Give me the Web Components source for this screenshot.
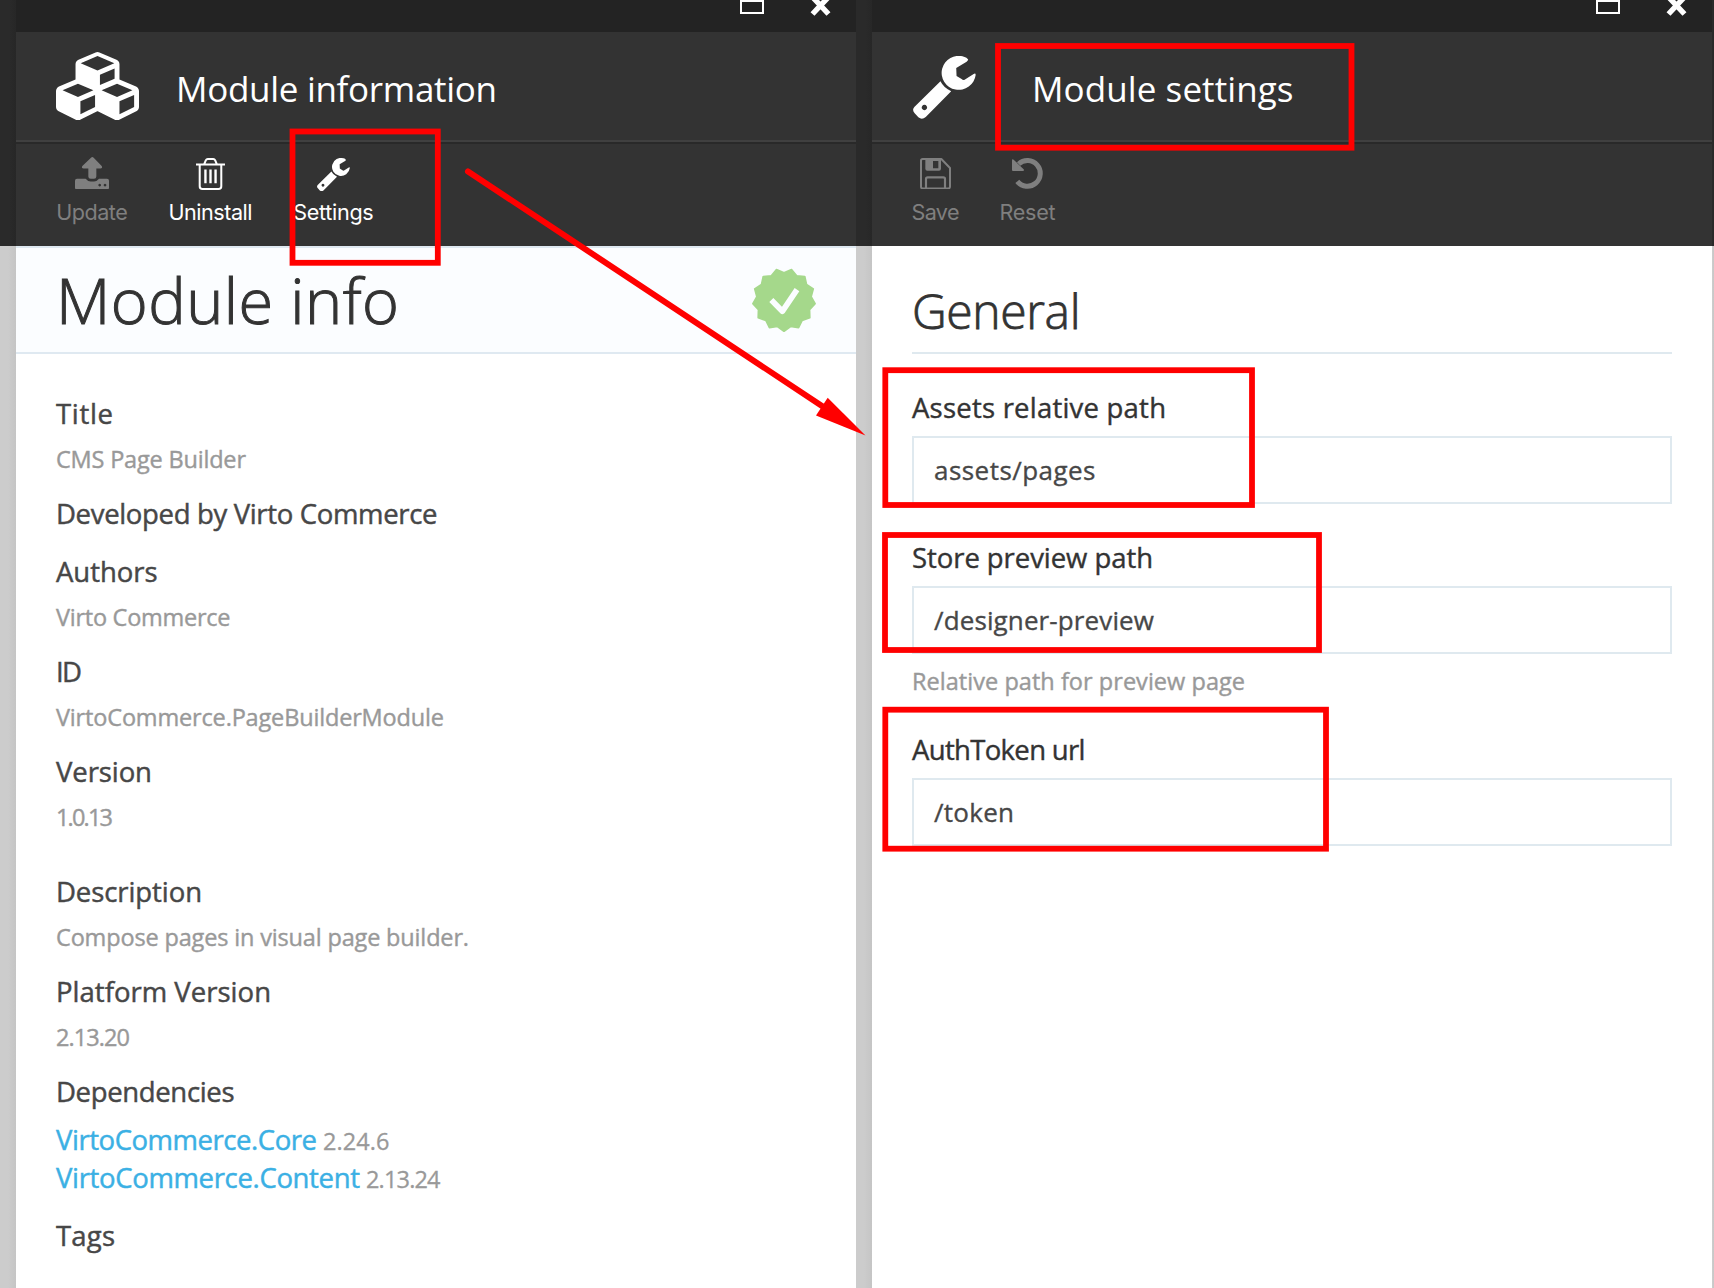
<!DOCTYPE html>
<html lang="en">
<head>
<meta charset="utf-8">
<title>Module settings</title>
<style>
html,body{margin:0;padding:0}
body{width:1714px;height:1288px;overflow:hidden;position:relative;background:#fff;font-family:"Open Sans","Noto Sans",sans-serif}
</style>
</head>
<body>
<vc-workspace>
  <vc-gutter style="--w:16px"></vc-gutter>
  <vc-blade>
    <vc-icon slot="icon" name="cubes" w="83" h="68.4"></vc-icon>
    <vc-text slot="title" w="321">Module information</vc-text>
    <vc-tool slot="tools" icon="update" iw="34" ih="32.5" dy="4.5" w="72" tw="71.5" label="Update" disabled></vc-tool>
    <vc-tool slot="tools" icon="trash" iw="29" ih="32" w="85" tw="84" label="Uninstall"></vc-tool>
    <vc-tool slot="tools" icon="wrench" iw="33" ih="33.5" w="81" tw="80.5" label="Settings"></vc-tool>
    <vc-banner><vc-text w="343">Module info</vc-text><vc-icon slot="badge" name="badge" w="64" h="64"></vc-icon></vc-banner>
    <vc-details>
      <vc-fact><vc-text w="57">Title</vc-text><vc-text slot="value" w="190">CMS Page Builder</vc-text></vc-fact>
      <vc-fact bare><vc-text w="381.5">Developed by Virto Commerce</vc-text></vc-fact>
      <vc-fact><vc-text w="101.5">Authors</vc-text><vc-text slot="value" w="174.5">Virto Commerce</vc-text></vc-fact>
      <vc-fact><vc-text w="26">ID</vc-text><vc-text slot="value" w="388">VirtoCommerce.PageBuilderModule</vc-text></vc-fact>
      <vc-fact class="last"><vc-text w="96">Version</vc-text><vc-text slot="value" w="57">1.0.13</vc-text></vc-fact>
      <vc-fact><vc-text w="146">Description</vc-text><vc-text slot="value" w="413">Compose pages in visual page builder.</vc-text></vc-fact>
      <vc-fact><vc-text w="215">Platform Version</vc-text><vc-text slot="value" w="74">2.13.20</vc-text></vc-fact>
      <vc-fact class="deps"><vc-text w="178.5">Dependencies</vc-text></vc-fact>
      <vc-dependency><vc-text w="261">VirtoCommerce.Core</vc-text><vc-text slot="version" w="66.5">2.24.6</vc-text></vc-dependency>
      <vc-dependency><vc-text w="304">VirtoCommerce.Content</vc-text><vc-text slot="version" w="74.5">2.13.24</vc-text></vc-dependency>
      <vc-fact class="tags"><vc-text w="59">Tags</vc-text></vc-fact>
    </vc-details>
  </vc-blade>
  <vc-gutter style="--w:16px"></vc-gutter>
  <vc-blade>
    <vc-icon slot="icon" class="low" name="wrench" w="63" h="63.3"></vc-icon>
    <vc-text slot="title" w="261.5">Module settings</vc-text>
    <vc-tool slot="tools" icon="save" iw="31" ih="31.4" w="47" tw="48" label="Save" disabled></vc-tool>
    <vc-tool slot="tools" icon="reset" iw="31" ih="31.4" w="57" tw="56" label="Reset" disabled></vc-tool>
    <vc-settings>
      <vc-text slot="heading" w="168.5">General</vc-text>
      <vc-setting><vc-text w="254">Assets relative path</vc-text><vc-text slot="value" w="161.5">assets/pages</vc-text></vc-setting>
      <vc-setting><vc-text w="241">Store preview path</vc-text><vc-text slot="value" w="220">/designer-preview</vc-text><vc-text slot="hint" w="333">Relative path for preview page</vc-text></vc-setting>
      <vc-setting><vc-text w="173.5">AuthToken url</vc-text><vc-text slot="value" w="80">/token</vc-text></vc-setting>
    </vc-settings>
  </vc-blade>
  <vc-gutter style="--w:2px"></vc-gutter>
</vc-workspace>
<vc-annotations></vc-annotations>

<script>
const element = (name, html, setup) => customElements.define(name, class extends HTMLElement {
  constructor() {
    super();
    this.attachShadow({ mode: 'open' });
  }
  connectedCallback() {
    this.shadowRoot.innerHTML = typeof html === 'function' ? html(this) : html;
    if (setup) setup(this);
  }
});

// Scalloped seal: 13 outer points, one of them at the bottom.
const seal = Array.from({ length: 26 }, (_, i) => {
  const a = Math.PI / 2 + i * Math.PI / 13, r = i % 2 ? 82 : 94;
  return (96 + r * Math.cos(a)).toFixed(1) + ',' + (96 + r * Math.sin(a)).toFixed(1);
}).join(' ');

const ICONS = {
  cubes: ['0 0 2176 1792', '<path fill-rule="evenodd" d="M640 1632l384-192v-314l-384 164v342zM576 1178l404-173l-404-173l-404 173zM1664 1632l384-192v-314l-384 164v342zM1600 1178l404-173l-404-173l-404 173zM1152 865l384-165v-266l-384 164v267zM1088 486l441-189l-441-189l-441 189zM2176 1024v416q0 36-19 67t-52 47l-448 224q-25 14-57 14t-57-14l-448-224q-4-2-7-4q-2 2-7 4l-448 224q-25 14-57 14t-57-14l-448-224q-33-16-52-47t-19-67v-416q0-38 21.5-70t56.5-48l434-186v-400q0-38 21.5-70t56.5-48l448-192q23-10 50-10t50 10l448 192q35 16 56.5 48t21.5 70v400l434 186q36 16 57 48t21 70z"/>'],
  wrench: ['0 0 188 190', '<path d="M164 10Q161 4 152 2A51 51 0 1 0 187 57Q187 50 181 54L154 71Q149 73 145 69L130 60L129 36L160 17Q166 13 164 10Z"/><path fill-rule="evenodd" d="M82 76Q91 95 114 106L38 183Q27 193 16 184L5 172Q-4 162 4 153ZM34 146.500a8 8 0 1 0 .1 0Z"/>'],
  update: ['0 0 102 97', '<path d="M52 0Q54 0 56 2L80 27Q84 34 76 34H64V58Q64 65 57 65H47Q40 65 40 58V34H26Q18 34 22 27L48 2Q50 0 52 0Z"/><path fill-rule="evenodd" d="M6 65H32Q38 73 47 73H57Q66 73 72 65H96Q102 65 102 71V91Q102 97 96 97H6Q0 97 0 91V71Q0 65 6 65ZM74 80a4 4 0 1 0 .1 0ZM90 80a4 4 0 1 0 .1 0Z"/>'],
  trash: ['0 0 86 94', '<g fill="none" stroke="currentColor" stroke-width="6"><path d="M0 19H86M24 19L29 7Q31 3 35 3H51Q55 3 57 7L62 19M11 19V83Q11 91 19 91H67Q75 91 75 83V19"/><path stroke-width="7" d="M28 34V74M43 34V74M58 34V74"/></g>'],
  save: ['0 0 93 94', '<g fill="none" stroke="currentColor" stroke-width="6"><path stroke-linejoin="round" d="M8 3H64L90 30V85Q90 91 85 91H8Q3 91 3 86V8Q3 3 8 3Z"/><path stroke-width="6.500" d="M18 92V63Q18 58 23 58H70Q75 58 75 63V92"/></g><path fill-rule="evenodd" d="M16 2H63V32Q63 38 57 38H22Q16 38 16 32ZM39 9V31H55V9Z"/>'],
  reset: ['0 0 93 94', '<path fill="none" stroke="currentColor" stroke-width="15" d="M16 70A38.500 38.500 0 1 0 20 18"/><path d="M0 7Q0 1 5 5L35 34Q38 39 32 39H3Q0 39 0 36Z"/>'],
  badge: ['0 0 192 192', `<polygon fill="#a5d88b" stroke="#a5d88b" stroke-width="5" stroke-linejoin="round" points="${seal}"/><path fill="none" stroke="#fbfdff" stroke-width="17" stroke-linejoin="round" d="M58 96L91 130L135 65"/>`]
};

element('vc-icon', h => {
  const [box, art] = ICONS[h.getAttribute('name')];
  const w = h.getAttribute('w'), t = h.getAttribute('h');
  return `<style>:host{display:block;width:${w}px;height:${t}px}svg{display:block;width:100%;height:100%;fill:currentColor}</style><svg viewBox="${box}" preserveAspectRatio="none">${art}</svg>`;
});

element('vc-workspace', `<style>:host{display:flex;width:1714px;height:1288px}</style><slot></slot>`);

element('vc-gutter', `<style>
:host{display:flex;flex-direction:column;flex:none;width:var(--w)}
.dark{height:246px;background:linear-gradient(90deg,#2a2a2a 60%,#272727)}
.light{flex:1;background:linear-gradient(90deg,#ccc 50%,#c5c5c5)}
</style><div class="dark"></div><div class="light"></div>`);

element('vc-blade', `<style>
:host{display:flex;flex-direction:column;flex:none;width:840px;height:1288px;background:#fff;color:#fff}
.bar{height:32px;flex:none;background:#232323;display:flex;justify-content:flex-end}
.bar svg{display:block;width:116px;height:32px}
header{height:108px;flex:none;background:#333;display:flex;border-bottom:2px solid #404040}
.mark{padding:20px 0 0 40px;box-sizing:border-box;width:160px}
::slotted(.low){margin-top:4px;margin-left:.7px}
.name{font-size:35px;line-height:48px;padding-top:33px}
nav{height:102px;flex:none;background:#333;display:flex;gap:40px;padding-left:40px;border-top:2px solid #292929}
main{flex:1;min-height:0;display:flex;flex-direction:column}
</style>
<div class="bar"><svg viewBox="0 0 116 32"><rect x="1" y="1" width="22" height="12" fill="none" stroke="#fff" stroke-width="2"/><path d="M72.500 -3L88.500 14M88.500 -3L72.500 14" stroke="#fff" stroke-width="5.400"/></svg></div>
<header><div class="mark"><slot name="icon"></slot></div><div class="name"><slot name="title"></slot></div></header>
<nav><slot name="tools"></slot></nav>
<main><slot></slot></main>`);

element('vc-tool', h => `<style>
:host{display:flex;flex-direction:column;align-items:center;width:${h.getAttribute('w')}px;color:#fff;font-family:Inter,sans-serif;font-size:21.600px}
:host([disabled]){color:#7f7f7f}
.pic{height:42px;box-sizing:border-box;margin-top:8px;padding-top:${h.getAttribute('dy') || 5.7}px}
.cap{line-height:28px;margin-top:4px}
</style><div class="pic"><vc-icon name="${h.getAttribute('icon')}" w="${h.getAttribute('iw')}" h="${h.getAttribute('ih')}"></vc-icon></div><div class="cap"><vc-text w="${h.getAttribute('tw')}">${h.getAttribute('label')}</vc-text></div>`);

element('vc-banner', `<style>
:host{display:flex;justify-content:space-between;align-items:center;height:104px;flex:none;background:#fbfdff;border-top:2px solid #dfe9f1;border-bottom:2px solid #dfe9f1;padding:0 40px}
.big{font-size:63px;font-weight:300;line-height:86px;color:#333;-webkit-text-stroke:1px #333}
</style><div class="big"><slot></slot></div><slot name="badge"></slot>`);

element('vc-details', `<style>
:host{display:flex;flex-direction:column;padding:37px 40px 0}
::slotted(.last){margin-bottom:30px}
::slotted(.deps){margin-bottom:7px}
::slotted(.tags){margin-top:16px}
</style><slot></slot>`);

element('vc-fact', `<style>
:host{display:block;margin-bottom:10px}
:host([bare]){margin-bottom:13px}
.term{font-size:27.500px;line-height:45px;height:45px;color:#474747;-webkit-text-stroke:.45px #474747}
.value{font-size:23.500px;line-height:44px;color:#999;margin-top:1px;-webkit-text-stroke:.4px #999}
</style><div class="term"><slot></slot></div><div class="value"><slot name="value"></slot></div>`,
  h => { if (!h.querySelector('[slot=value]')) h.shadowRoot.querySelector('.value').remove(); });

element('vc-dependency', `<style>
:host{display:flex;align-items:baseline;gap:6px;height:38px;line-height:38px;font-size:27.500px;color:#3bb0e4;-webkit-text-stroke:.45px #3bb0e4}
.v{font-size:23.500px;color:#999;-webkit-text-stroke:.3px #999}
</style><slot></slot><span class="v"><slot name="version"></slot></span>`);

element('vc-settings', `<style>
:host{display:flex;flex-direction:column;padding:0 40px}
.heading{border-bottom:2px solid #dfe9ef;color:#333;font-size:48px;font-weight:300;line-height:66px;box-sizing:border-box;padding-top:32px;height:108px;margin-bottom:31px;-webkit-text-stroke:.8px #333}
</style><div class="heading"><slot name="heading"></slot></div><slot></slot>`);

element('vc-setting', `<style>
:host{display:block;margin-bottom:31px}
.label{font-size:27.500px;line-height:45px;height:45px;color:#333;margin-bottom:6px;-webkit-text-stroke:.4px #333}
.box{height:68px;box-sizing:border-box;border:2px solid #dfe9ef;padding-left:20px;font-size:26px;line-height:64px;color:#474747;-webkit-text-stroke:.35px #474747}
.hint{font-size:23.500px;line-height:42px;color:#999;margin-top:6px;height:42px;margin-bottom:-6px;-webkit-text-stroke:.4px #999}
</style><div class="label"><slot></slot></div><div class="box"><slot name="value"></slot></div><div class="hint"><slot name="hint"></slot></div>`,
  h => { if (!h.querySelector('[slot=hint]')) h.shadowRoot.querySelector('.hint').remove(); });

element('vc-annotations', `<style>
:host{display:block;position:absolute;left:0;top:0;width:1714px;height:1288px;pointer-events:none}
</style><svg width="1714" height="1288" viewBox="0 0 1714 1288"><g fill="none" stroke="#f00" stroke-width="5.800">
<rect x="292.500" y="131.500" width="145.300" height="131.300"/>
<rect x="998" y="46" width="353.500" height="101.700"/>
<rect x="885.300" y="370.200" width="366.700" height="134.800"/>
<rect x="885" y="535" width="434" height="115"/>
<rect x="885.300" y="709.700" width="440.700" height="139"/>
<path d="M468 171.500L825 408" stroke-width="6" stroke-linecap="round"/></g>
<path fill="#f00" d="M827.700 397.700L816 415.500L865.500 435.500Z"/></svg>`);

// A line of text tracked to the advance given in its w attribute.
element('vc-text', `<style>:host{display:inline-block;white-space:nowrap}</style><slot></slot>`, h => {
  const natural = h.getBoundingClientRect().width, n = h.textContent.length;
  const s = (Number(h.getAttribute('w')) - natural) / (n - 1);
  h.style.letterSpacing = s.toFixed(3) + 'px';
  h.style.marginRight = (-s).toFixed(3) + 'px';
});
</script>
</body>
</html>
